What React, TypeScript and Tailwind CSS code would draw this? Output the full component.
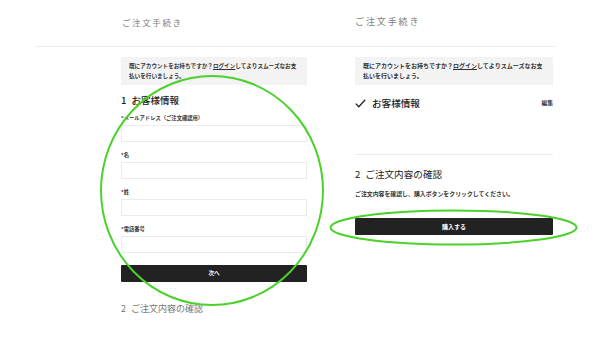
const jp = "font-['Noto_Sans_CJK_JP','Noto_Sans',sans-serif]";

const fields = ["*メールアドレス（ご注文確認用）", "*名", "*姓", "*電話番号"];

const LoginNote = ({ size }: { size: string }) => (
  <div className={`bg-[#f3f3f3] px-[8px] pt-[4px] pb-[4px] leading-[10px] font-bold text-[#333] ${size}`}>
    <p>既にアカウントをお持ちですか？<span className="underline">ログイン</span>してよりスムーズなお支</p>
    <p>払いを行いましょう。</p>
  </div>
);

export default function App() {
  return (
    <div className={`relative w-[600px] h-[338px] overflow-hidden bg-white ${jp}`}>
      {/* titles */}
      <div className="flex pt-[15px]">
        <div className="ml-[122px] w-[185px] text-[8.5px] leading-[14px] tracking-[1.6px] text-[#808080]">ご注文手続き</div>
        <div className="ml-[48px] w-[198px] text-[9px] leading-[14px] tracking-[1.9px] text-[#808080]">ご注文手続き</div>
      </div>
      <div className="ml-[35px] mt-[17px] w-[520px] h-px bg-[#ededed]" />

      <div className="flex">
        {/* left: step 1 form */}
        <div className="ml-[121px] w-[186px] flex flex-col">
          <div className="mt-[10px]">
            <LoginNote size="text-[5.6px]" />
          </div>
          <div className="mt-[9px] text-[9.5px] leading-[12px] text-[#222] font-medium">
            1<span className="ml-[5px]">お客様情報</span>
          </div>
          {fields.map((f, i) => (
            <div key={f} className={i === 0 ? "mt-[8px]" : "mt-[9px]"}>
              <div className="text-[5.3px] leading-[8px] text-[#333] font-bold">{f}</div>
              <div className="mt-[3px] h-[17px] border border-[#ebebeb] bg-white" />
            </div>
          ))}
          <button className="mt-[12px] h-[17px] w-full bg-[#222] rounded-[1px] text-white text-[5.6px] font-bold">次へ</button>
          <div className="mt-[21px] text-[9px] leading-[12px] text-[#777]">
            2<span className="ml-[5px]">ご注文内容の確認</span>
          </div>
        </div>

        {/* right: step 2 */}
        <div className="ml-[48px] w-[198px] flex flex-col">
          <div className="mt-[10px]">
            <LoginNote size="text-[6px]" />
          </div>
          <div className="mt-[12px] flex items-center justify-between leading-[12px]">
            <div className="flex items-center text-[9.6px] text-[#222] font-medium">
              <svg width="11" height="9" viewBox="0 0 11 9" className="mr-[6px]">
                <polyline points="0.8,4.6 3.8,7.8 10.2,0.8" fill="none" stroke="#222" strokeWidth="1.3" />
              </svg>
              お客様情報
            </div>
            <div className="text-[5.8px] font-bold text-[#333]">編集</div>
          </div>
          <div className="mt-[45px] h-px bg-[#ececec]" />
          <div className="mt-[13px] text-[9.6px] leading-[12px] text-[#222]">
            2<span className="ml-[5px]">ご注文内容の確認</span>
          </div>
          <div className="mt-[10px] text-[5.9px] leading-[8px] font-bold text-[#333]">
            ご注文内容を確認し、購入ボタンをクリックしてください。
          </div>
          <button className="mt-[20px] h-[17px] w-full bg-[#222] rounded-[1px] text-white text-[6px] font-bold">購入する</button>
        </div>
      </div>

      {/* green annotation marks */}
      <svg className="absolute inset-0 pointer-events-none" width="600" height="338">
        <ellipse cx="212" cy="190.5" rx="111" ry="114.5" fill="none" stroke="#4bd12c" strokeWidth="2" />
        <ellipse cx="453.5" cy="227.5" rx="123" ry="17" fill="none" stroke="#4bd12c" strokeWidth="2" />
      </svg>
    </div>
  );
}
